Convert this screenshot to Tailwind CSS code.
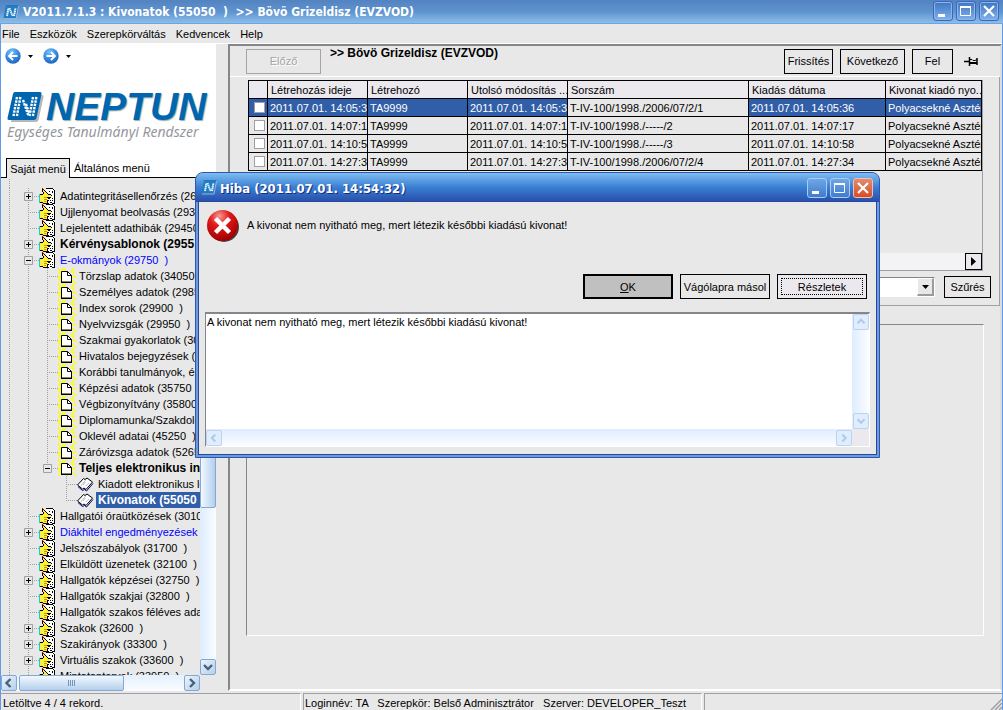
<!DOCTYPE html>
<html lang="hu">
<head>
<meta charset="utf-8">
<title>Neptun - Kivonatok</title>
<script src="https://cdn.jsdelivr.net/npm/@tailwindcss/browser@4"></script>
</head>
<body class="h-screen overflow-hidden bg-[#e8e8e8] font-['Liberation_Sans',Arial,sans-serif] text-[11px] leading-4 text-black">

<svg class="absolute size-0" aria-hidden="true">
  <defs>
    <radialGradient id="ball" cx=".4" cy=".25" r=".8"><stop offset="0" stop-color="#7cc0f8"/><stop offset=".6" stop-color="#2f86dc"/><stop offset="1" stop-color="#1f62b8"/></radialGradient>
    <radialGradient id="red" cx=".4" cy=".2" r=".8"><stop offset="0" stop-color="#f79a94"/><stop offset=".4" stop-color="#e01a1a"/><stop offset="1" stop-color="#a00000"/></radialGradient>
  </defs>
  <!-- tree guides -->
  <symbol id="v" viewBox="0 0 19 16"><path d="M8.5 0V16" stroke="#a0a0a4" stroke-dasharray="1 1"/></symbol>
  <symbol id="t" viewBox="0 0 19 16"><path d="M8.5 0V16M10 8.500H19" stroke="#a0a0a4" stroke-dasharray="1 1"/></symbol>
  <symbol id="e" viewBox="0 0 19 16"><path d="M8.500 0V8M8 8.500H19" stroke="#a0a0a4" stroke-dasharray="1 1"/></symbol>
  <symbol id="p" viewBox="0 0 19 16"><path d="M8.500 0V16M10 8.500H19" stroke="#a0a0a4" stroke-dasharray="1 1"/><path d="M4.500 4.500h8v8h-8z" fill="#e8e8e8" stroke="#a0a0a4"/><path d="M6 8.500h5M8.500 6v5" stroke="#000"/></symbol>
  <symbol id="m" viewBox="0 0 19 16"><path d="M8.500 0V16M10 8.500H19" stroke="#a0a0a4" stroke-dasharray="1 1"/><path d="M4.500 4.500h8v8h-8z" fill="#e8e8e8" stroke="#a0a0a4"/><path d="M6 8.500h5" stroke="#000"/></symbol>
  <symbol id="me" viewBox="0 0 19 16"><path d="M8.500 0V8M10 8.500H19" stroke="#a0a0a4" stroke-dasharray="1 1"/><path d="M4.500 4.500h8v8h-8z" fill="#e8e8e8" stroke="#a0a0a4"/><path d="M6 8.500h5" stroke="#000"/></symbol>
  <!-- document with a pointing hand -->
  <symbol id="hand" viewBox="0 0 19 16">
    <g shape-rendering="crispEdges">
      <path d="M7 0h7l2 2v14H7z" fill="#fff"/>
      <path d="M7 0h7v1H7zM14 1h1v1h-1zM15 2h1v13h-1zM7 15h3v1H7zM11 14h2v1h-2zM13 15h3v1h-3zM10 3h1v1h-1zM13 3h1v2h-1zM12 7h1v1h-1zM13 10h1v1h-1zM11 12h1v1h-1zM13 12h1v1h-1z" fill="#000"/>
      <path d="M0 6h1v9H0z" fill="#00d8e0"/>
      <path d="M1 7h3v7H1zM4 6h4v9H4zM8 7h4v2H8zM8 9h2v2H8zM8 11h1v3H8zM4 2h1v2H4zM5 3h1v3H5zM6 4h1v2H6zM7 5h2v2H7z" fill="#ffee3c"/>
      <path d="M1 6h3v1H1zM3 1h1v3H3zM4 4h1v2H4zM5 2h1v1H5zM6 3h1v1H6zM7 4h1v1H7zM8 5h1v1H8zM9 6h3v1H9zM12 7h1v1h-1zM8 9h4v1H8zM9 10h2v1H9zM8 12h2v1H8zM8 13h1v2H8zM1 14h3v1H1zM4 15h4v1H4z" fill="#000"/>
      <path d="M5 9h3v1H5zM5 11h3v1H5zM5 13h2v1H5z" fill="#b8a000"/>
      <path d="M3 0h1v1H3zM4 1h1v1H4z" fill="#c00000"/>
    </g>
  </symbol>
  <!-- new page with sparks -->
  <symbol id="page" viewBox="0 0 19 16">
    <path d="M0 1l4 4M6.500 0v3M16 0l-3 4M0 8.500h3M14 8.500h4M0 15.500l4-4M14 12l4 3.500M8.500 16v-2M4 0l1 3M17 4l-3 1M0 5l3 1M0 11l3-1" stroke="#ffff00" stroke-width="1.500"/>
    <path d="M3.500 3.500h6l4 4v6.500h-10z" fill="#fff" stroke="#000"/>
    <path d="M9.500 3.500v4h4" fill="none" stroke="#000"/><path d="M3 14.500h11" stroke="#000"/>
  </symbol>
  <!-- open book -->
  <symbol id="book" viewBox="0 0 19 16">
    <path d="M.5 9L6.500 2.500 8 3.500 10 2l5.500 4-6.500 7.500-2-1.500-1.500 1z" fill="#fff" stroke="#000"/>
    <path d="M1 10.500l4.500 4 2-1 2 1.500 6.500-7.500" fill="none" stroke="#000080"/>
    <path d="M9 3.500L3.500 10.500M6 9l2.500-3M9 10l3-3" fill="none" stroke="#999" stroke-width=".6"/>
  </symbol>
  <symbol id="neptun" viewBox="0 0 37 31">
    <path d="M9 3h26q2 0 1.500 2l-5 23q-.5 2-2.500 2H4z" fill="#b4b8bc"/>
    <path d="M8 0h25q2 0 1.500 2l-5 24q-.4 2-2.500 2H2q-2 0-1.500-2L6 2q.4-2 2-2z" fill="#0066b0"/>
    <g fill="none" stroke="#fff" stroke-width="2.400" stroke-dasharray="2.400 1"><path d="M10 5L6.500 24M13.400 5L9.900 24M26 5l-3.500 19M29.400 5l-3.500 19"/><path d="M16 8l5.500 16M19 12l3 9"/></g>
  </symbol>
  <symbol id="app" viewBox="0 0 16 16">
    <path d="M3 1h12.500L13 14H.5z" fill="#1d7cc4"/><path d="M1 15h12l2.500-13" fill="none" stroke="#9ab6d2"/>
    <path d="M4 12L5.500 4M6.500 4l3 8M11 12l1.500-8" fill="none" stroke="#e4f3fc" stroke-width="2" stroke-dasharray="1.500 .4"/>
  </symbol>
  <symbol id="min" viewBox="0 0 20 20"><path d="M5 13h7v3H5z" fill="#fff"/></symbol>
  <symbol id="max" viewBox="0 0 20 20"><path d="M4.500 5.500h10v9h-10z" fill="none" stroke="#fff"/><path d="M4 5h11v2H4z" fill="#fff"/></symbol>
  <symbol id="cls" viewBox="0 0 20 20"><path d="M5 5l10 10M15 5L5 15" stroke="#fff" stroke-width="2.200"/></symbol>
  <symbol id="up" viewBox="0 0 16 16"><path d="M4 9.500L8 5.500l4 4" fill="none" stroke="currentColor" stroke-width="2.400"/></symbol>
  <symbol id="dn" viewBox="0 0 16 16"><path d="M4 6l4 4 4-4" fill="none" stroke="currentColor" stroke-width="2.400"/></symbol>
  <symbol id="lf" viewBox="0 0 16 16"><path d="M9.500 4l-4 4 4 4" fill="none" stroke="currentColor" stroke-width="2.400"/></symbol>
  <symbol id="rt" viewBox="0 0 16 16"><path d="M6 4l4 4-4 4" fill="none" stroke="currentColor" stroke-width="2.400"/></symbol>
</svg>

<div class="relative flex h-full flex-col border-x border-[#5f9be8]">

  <header class="-mx-px flex h-6 shrink-0 items-center border-b border-[#6ea4e0] bg-linear-to-b from-[#5383c1] via-[#5e93cf] to-[#8cbdea] pr-1 pl-[3px]">
    <svg class="size-4"><use href="#app"/></svg>
    <h1 class="ml-1 flex-1 font-['DejaVu_Sans_Condensed','DejaVu_Sans',sans-serif] text-[12px] font-bold whitespace-pre text-white">V2011.7.1.3 : Kivonatok (55050  )  &gt;&gt; Bövö Grizeldisz (EVZVOD)</h1>
    <div class="-mt-[2px] flex gap-[3px]">
      <button aria-label="Kis méret" class="size-5 rounded-[3px] border border-[#3f66b8] bg-linear-to-b from-[#3f74c4] to-[#7fb2ea] shadow-[inset_0_0_0_1px_#8bb6ea]"><svg class="-m-px size-5"><use href="#min"/></svg></button>
      <button aria-label="Teljes méret" class="size-5 rounded-[3px] border border-[#3f66b8] bg-linear-to-b from-[#3f74c4] to-[#7fb2ea] shadow-[inset_0_0_0_1px_#8bb6ea]"><svg class="-m-px size-5"><use href="#max"/></svg></button>
      <button aria-label="Bezárás" class="size-5 rounded-[3px] border border-[#3f66b8] bg-linear-to-b from-[#3f74c4] to-[#7fb2ea] shadow-[inset_0_0_0_1px_#8bb6ea]"><svg class="-m-px size-5"><use href="#cls"/></svg></button>
    </div>
  </header>

  <nav class="flex h-5 shrink-0 items-center gap-[10px] border-b border-white pl-px">
    <button>File</button><button>Eszközök</button><button>Szerepkörváltás</button><button>Kedvencek</button><button>Help</button>
  </nav>

  <main class="flex min-h-0 flex-1">

    <aside class="flex w-[215px] shrink-0 flex-col">
      <div class="bg-white pt-1 pl-1">
        <div class="flex h-4 items-center">
          <button aria-label="Vissza"><svg class="size-4" viewBox="0 0 16 16"><circle cx="8" cy="8" r="7.700" fill="url(#ball)"/><path d="M12.500 8H4.500M8 4L4 8l4 4" fill="none" stroke="#fff" stroke-width="1.800"/></svg></button>
          <button aria-label="Előzmények" class="ml-[7px]"><svg class="size-[5px]" viewBox="0 0 5 5"><path d="M0 1h5L2.500 4z"/></svg></button>
          <button aria-label="Előre" class="ml-[10px]"><svg class="size-4" viewBox="0 0 16 16"><circle cx="8" cy="8" r="7.700" fill="url(#ball)"/><path d="M3.500 8h8M8 4l4 4-4 4" fill="none" stroke="#fff" stroke-width="1.800"/></svg></button>
          <button aria-label="Következők" class="ml-[7px]"><svg class="size-[5px]" viewBox="0 0 5 5"><path d="M0 1h5L2.500 4z"/></svg></button>
        </div>
        <div class="mt-7 flex h-[30px] items-center gap-[2px] pl-[2px]">
          <svg class="h-[31px] w-[37px]"><use href="#neptun"/></svg>
          <span class="text-[39px] leading-[30px] font-bold text-[#0066b0] italic [text-shadow:1px_1px_1px_#9aa]">NEPTUN</span>
        </div>
        <p class="pl-[2px] font-['Noto_Sans','Open_Sans',sans-serif] text-[14px] leading-5 whitespace-nowrap text-[#94979c] italic">Egységes Tanulmányi Rendszer</p>
        <div class="mt-4 -ml-1 flex h-5 items-end" role="tablist">
          <span class="h-px w-[5px] bg-black"></span>
          <button role="tab" aria-selected="true" class="h-5 w-16 border border-b-0 border-black bg-[#e8e8e8] whitespace-nowrap">Saját menü</button>
          <button role="tab" aria-selected="false" class="h-5 flex-1 border-b border-black pl-1 text-left">Általános menü</button>
        </div>
      </div>

      <div class="flex min-h-0 flex-1">
        <div class="flex min-w-0 flex-1 flex-col">
          <ul class="min-h-0 flex-1 overflow-hidden [&>li]:flex [&>li]:h-4 [&>li]:items-center [&_svg]:h-4 [&_svg]:w-[19px] [&_svg]:shrink-0 [&_a]:ml-[2px] [&_a]:shrink-0 [&_a]:whitespace-pre">
            <li class="h-[10px]! overflow-hidden"><svg><use href="#v"/></svg></li>
            <li><svg><use href="#v"/></svg><svg><use href="#p"/></svg><svg><use href="#hand"/></svg><a href="#">Adatintegritásellenőrzés (268</a></li>
            <li><svg><use href="#v"/></svg><svg><use href="#t"/></svg><svg><use href="#hand"/></svg><a href="#">Ujjlenyomat beolvasás (2930</a></li>
            <li><svg><use href="#v"/></svg><svg><use href="#t"/></svg><svg><use href="#hand"/></svg><a href="#">Lejelentett adathibák (29450</a></li>
            <li><svg><use href="#v"/></svg><svg><use href="#p"/></svg><svg><use href="#hand"/></svg><a href="#" class="text-[12px] font-bold">Kérvénysablonok (2955</a></li>
            <li><svg><use href="#v"/></svg><svg><use href="#m"/></svg><svg><use href="#hand"/></svg><a href="#" class="text-[#0000ff]">E-okmányok (29750  )</a></li>
            <li><svg><use href="#v"/></svg><svg><use href="#v"/></svg><svg><use href="#t"/></svg><svg><use href="#page"/></svg><a href="#">Törzslap adatok (34050</a></li>
            <li><svg><use href="#v"/></svg><svg><use href="#v"/></svg><svg><use href="#t"/></svg><svg><use href="#page"/></svg><a href="#">Személyes adatok (2985</a></li>
            <li><svg><use href="#v"/></svg><svg><use href="#v"/></svg><svg><use href="#t"/></svg><svg><use href="#page"/></svg><a href="#">Index sorok (29900  )</a></li>
            <li><svg><use href="#v"/></svg><svg><use href="#v"/></svg><svg><use href="#t"/></svg><svg><use href="#page"/></svg><a href="#">Nyelvvizsgák (29950  )</a></li>
            <li><svg><use href="#v"/></svg><svg><use href="#v"/></svg><svg><use href="#t"/></svg><svg><use href="#page"/></svg><a href="#">Szakmai gyakorlatok (30</a></li>
            <li><svg><use href="#v"/></svg><svg><use href="#v"/></svg><svg><use href="#t"/></svg><svg><use href="#page"/></svg><a href="#">Hivatalos bejegyzések (3</a></li>
            <li><svg><use href="#v"/></svg><svg><use href="#v"/></svg><svg><use href="#t"/></svg><svg><use href="#page"/></svg><a href="#">Korábbi tanulmányok, ére</a></li>
            <li><svg><use href="#v"/></svg><svg><use href="#v"/></svg><svg><use href="#t"/></svg><svg><use href="#page"/></svg><a href="#">Képzési adatok (35750</a></li>
            <li><svg><use href="#v"/></svg><svg><use href="#v"/></svg><svg><use href="#t"/></svg><svg><use href="#page"/></svg><a href="#">Végbizonyítvány (35800</a></li>
            <li><svg><use href="#v"/></svg><svg><use href="#v"/></svg><svg><use href="#t"/></svg><svg><use href="#page"/></svg><a href="#">Diplomamunka/Szakdolg</a></li>
            <li><svg><use href="#v"/></svg><svg><use href="#v"/></svg><svg><use href="#t"/></svg><svg><use href="#page"/></svg><a href="#">Oklevél adatai (45250  )</a></li>
            <li><svg><use href="#v"/></svg><svg><use href="#v"/></svg><svg><use href="#t"/></svg><svg><use href="#page"/></svg><a href="#">Záróvizsga adatok (5265</a></li>
            <li><svg><use href="#v"/></svg><svg><use href="#v"/></svg><svg><use href="#me"/></svg><svg><use href="#page"/></svg><a href="#" class="text-[12px] font-bold">Teljes elektronikus in</a></li>
            <li><svg><use href="#v"/></svg><svg><use href="#v"/></svg><span class="w-[19px] shrink-0"></span><svg><use href="#t"/></svg><svg><use href="#book"/></svg><a href="#">Kiadott elektronikus le</a></li>
            <li><svg><use href="#v"/></svg><svg><use href="#v"/></svg><span class="w-[19px] shrink-0"></span><svg><use href="#e"/></svg><svg><use href="#book"/></svg><a href="#" class="ml-0! flex-1 bg-[#315ea8] pl-[2px] text-[12px] font-bold text-white">Kivonatok (55050</a></li>
            <li><svg><use href="#v"/></svg><svg><use href="#t"/></svg><svg><use href="#hand"/></svg><a href="#">Hallgatói óraütközések (3010</a></li>
            <li><svg><use href="#v"/></svg><svg><use href="#p"/></svg><svg><use href="#hand"/></svg><a href="#" class="text-[#0000ff]">Diákhitel engedményezések (</a></li>
            <li><svg><use href="#v"/></svg><svg><use href="#t"/></svg><svg><use href="#hand"/></svg><a href="#">Jelszószabályok (31700  )</a></li>
            <li><svg><use href="#v"/></svg><svg><use href="#t"/></svg><svg><use href="#hand"/></svg><a href="#">Elküldött üzenetek (32100  )</a></li>
            <li><svg><use href="#v"/></svg><svg><use href="#p"/></svg><svg><use href="#hand"/></svg><a href="#">Hallgatók képzései (32750  )</a></li>
            <li><svg><use href="#v"/></svg><svg><use href="#t"/></svg><svg><use href="#hand"/></svg><a href="#">Hallgatók szakjai (32800  )</a></li>
            <li><svg><use href="#v"/></svg><svg><use href="#t"/></svg><svg><use href="#hand"/></svg><a href="#">Hallgatók szakos féléves ada</a></li>
            <li><svg><use href="#v"/></svg><svg><use href="#p"/></svg><svg><use href="#hand"/></svg><a href="#">Szakok (32600  )</a></li>
            <li><svg><use href="#v"/></svg><svg><use href="#p"/></svg><svg><use href="#hand"/></svg><a href="#">Szakirányok (33300  )</a></li>
            <li><svg><use href="#v"/></svg><svg><use href="#p"/></svg><svg><use href="#hand"/></svg><a href="#">Virtuális szakok (33600  )</a></li>
            <li><svg><use href="#v"/></svg><svg><use href="#t"/></svg><svg><use href="#hand"/></svg><a href="#">Mintatantervek (33950  )</a></li>
          </ul>
          <div class="flex h-4 shrink-0 bg-linear-to-b from-[#e3f0ff] to-[#fbfdff] text-[#4a6078]">
            <button aria-label="Balra" class="size-4 rounded-[2px] border border-[#86a8d0] bg-linear-to-br from-[#eaf5fe] to-[#b4cfec]"><svg class="-m-px size-4"><use href="#lf"/></svg></button>
            <span class="ml-[2px] flex w-[105px] items-center justify-center gap-px rounded-[2px] border border-[#86a8d0] bg-linear-to-b from-[#f2f9ff] to-[#b4cfec]"><i class="h-[6px] w-px bg-[#7894b8]"></i><i class="h-[6px] w-px bg-[#7894b8]"></i><i class="h-[6px] w-px bg-[#7894b8]"></i><i class="h-[6px] w-px bg-[#7894b8]"></i></span>
            <button aria-label="Jobbra" class="ml-auto size-4 rounded-[2px] border border-[#86a8d0] bg-linear-to-br from-[#eaf5fe] to-[#b4cfec]"><svg class="-m-px size-4"><use href="#rt"/></svg></button>
          </div>
        </div>
        <div class="mb-4 flex w-4 shrink-0 flex-col bg-linear-to-r from-[#dcecff] to-[#fbfdff] text-[#4a6078]">
          <button aria-label="Fel" class="size-4 rounded-[2px] border border-[#86a8d0] bg-linear-to-br from-[#eaf5fe] to-[#b4cfec]"><svg class="-m-px size-4"><use href="#up"/></svg></button>
          <span class="h-[314px] rounded-[2px] border border-[#86a8d0] bg-linear-to-r from-[#f2f9ff] to-[#b4cfec]"></span>
          <button aria-label="Le" class="mt-auto size-4 rounded-[2px] border border-[#86a8d0] bg-linear-to-br from-[#eaf5fe] to-[#b4cfec]"><svg class="-m-px size-4"><use href="#dn"/></svg></button>
        </div>
      </div>
    </aside>

    <section class="ml-3 flex min-w-0 flex-1 flex-col border-2 border-t-[#85858c] border-r-[#dcdce0] border-b-white border-l-[#85858c]">
      <div class="flex h-[31px] shrink-0 items-center border-b border-white pr-[22px] pl-4">
        <button disabled class="h-[25px] w-[75px] border border-[#a5a5a8] text-[#a5a5a8] [text-shadow:1px_1px_0_#fff]">Előző</button>
        <h2 class="ml-[9px] flex-1 self-start text-[12px] leading-[14px] font-bold">&gt;&gt; Bövö Grizeldisz (EVZVOD)</h2>
        <button class="h-[25px] w-[49px] border border-black">Frissítés</button>
        <button class="ml-[7px] h-[25px] w-[65px] border border-black">Következő</button>
        <button class="ml-[7px] h-[25px] w-[41px] border border-black">Fel</button>
        <button aria-label="Rögzítés" class="ml-[11px]"><svg class="h-[9px] w-[14px]" viewBox="0 0 14 9"><path d="M0 4.500h5" stroke="#000" stroke-width="1.500"/><path d="M5.500 0v9M13 1v7" stroke="#000" stroke-width="1.500"/><path d="M6 2.500h2l1 1h2l2-1" fill="none" stroke="#000"/><path d="M6 6h7" stroke="#000" stroke-width="2"/></svg></button>
      </div>

      <div class="flex h-[229px] shrink-0 flex-col border-r border-b border-[#a0a0a4] pr-2 pl-[18px]">
        <div class="mt-[3px] mr-2 flex h-[191px] shrink-0 flex-col border-r border-b border-[#a0a0a4]">
          <table class="w-full table-fixed border-collapse text-left [&_td]:h-[18px] [&_td]:overflow-hidden [&_td]:border [&_td]:border-black [&_td]:p-0 [&_td]:pl-[2px] [&_td]:leading-[14px] [&_td]:whitespace-nowrap [&_th]:h-[18px] [&_th]:overflow-hidden [&_th]:border [&_th]:border-black [&_th]:bg-[#ebe9ed] [&_th]:p-0 [&_th]:pl-[3px] [&_th]:leading-[14px] [&_th]:font-normal [&_th]:whitespace-nowrap [&_input]:mx-auto [&_input]:block [&_input]:size-[11px] [&_input]:appearance-none [&_input]:border [&_input]:border-[#a0a0a4] [&_input]:bg-white">
            <colgroup><col class="w-[19px]"><col class="w-[100px]"><col class="w-[100px]"><col class="w-[100px]"><col><col class="w-[137px]"><col class="w-[96px]"></colgroup>
            <thead><tr><th></th><th>Létrehozás ideje</th><th>Létrehozó</th><th>Utolsó módosítás ...</th><th>Sorszám</th><th>Kiadás dátuma</th><th>Kivonat kiadó nyo...</th></tr></thead>
            <tbody>
              <tr class="bg-[#315ea8] text-white"><td><input type="checkbox" aria-label="1. sor"></td><td>2011.07.01. 14:05:3</td><td>TA9999</td><td>2011.07.01. 14:05:3</td><td class="bg-[#e8e8e8] text-black">T-IV-100/1998./2006/07/2/1</td><td>2011.07.01. 14:05:36</td><td>Polyacsekné Asztér</td></tr>
              <tr><td><input type="checkbox" aria-label="2. sor"></td><td>2011.07.01. 14:07:1</td><td>TA9999</td><td>2011.07.01. 14:07:1</td><td>T-IV-100/1998./-----/2</td><td>2011.07.01. 14:07:17</td><td>Polyacsekné Asztér</td></tr>
              <tr><td><input type="checkbox" aria-label="3. sor"></td><td>2011.07.01. 14:10:5</td><td>TA9999</td><td>2011.07.01. 14:10:5</td><td>T-IV-100/1998./-----/3</td><td>2011.07.01. 14:10:58</td><td>Polyacsekné Asztér</td></tr>
              <tr><td><input type="checkbox" aria-label="4. sor"></td><td>2011.07.01. 14:27:3</td><td>TA9999</td><td>2011.07.01. 14:27:3</td><td>T-IV-100/1998./2006/07/2/4</td><td>2011.07.01. 14:27:34</td><td>Polyacsekné Asztér</td></tr>
            </tbody>
          </table>
          <div class="mt-auto flex h-[17px] justify-end bg-[#f3f2f4]">
            <button aria-label="Görgetés jobbra" class="h-[17px] w-[17px] border border-black bg-[#ebe9ed]"><svg class="mx-auto h-[9px] w-[5px]" viewBox="0 0 5 9"><path d="M0 0l5 4.500L0 9z"/></svg></button>
          </div>
        </div>
        <div class="mt-[5px] flex h-[22px] items-center justify-end gap-[9px]">
          <div class="relative w-[400px]">
            <select aria-label="Szűrés mezője" class="block h-5 w-full appearance-none border border-t-[#85858c] border-r-white border-b-white border-l-[#85858c] bg-white"><option></option></select>
            <span class="pointer-events-none absolute top-px right-px flex h-[18px] w-[17px] items-center justify-center border border-r-2 border-b-2 border-white border-r-[#9a9aa0] border-b-[#9a9aa0] bg-[#e8e8e8]"><svg class="h-1 w-[7px]" viewBox="0 0 7 4"><path d="M0 0h7L3.500 4z"/></svg></span>
          </div>
          <button class="h-[22px] w-[47px] border border-black">Szűrés</button>
        </div>
      </div>
      <div class="mt-[18px] mr-4 mb-[53px] ml-4 flex-1 border border-t-[#85858c] border-r-white border-b-white border-l-[#85858c]"></div>
    </section>
  </main>

  <footer class="mt-[2px] flex h-[17px] shrink-0 items-stretch gap-[2px] leading-[18px] whitespace-pre">
    <div class="w-[300px] border-t border-r border-t-[#a0a0a4] border-r-white pl-[2px]">Letöltve 4 / 4 rekord.</div>
    <div class="w-[399px] border-t border-r border-l border-t-[#a0a0a4] border-r-white border-l-[#a0a0a4] pl-px">Loginnév: TA   Szerepkör: Belső Adminisztrátor   Szerver: DEVELOPER_Teszt</div>
    <div class="flex flex-1 items-end justify-end border-t border-l border-[#a0a0a4]"><svg class="size-3" viewBox="0 0 12 12"><path d="M1 12L12 1M5 12l7-7M9 12l3-3" stroke="#a0a0a4" stroke-width="1.500"/></svg></div>
  </footer>

  <!-- error dialog -->
  <div role="dialog" aria-labelledby="dlg" class="absolute top-[172px] left-[194px] flex w-[685px] flex-col rounded-t-lg border border-[#2e56ae] bg-[#6e9bdc]">
    <div class="flex h-[29px] items-center rounded-t-[7px] border-b border-[#2548a0] bg-linear-to-b from-[#7fbcf0] via-[#3a80d4] to-[#2a50ac] pr-[6px] pl-[5px]">
      <svg class="size-4"><use href="#app"/></svg>
      <h2 id="dlg" class="mt-[3px] ml-[3px] flex-1 font-['DejaVu_Sans_Condensed','DejaVu_Sans',sans-serif] text-[13px] font-bold text-white [text-shadow:1px_1px_0_#14307c]">Hiba (2011.07.01. 14:54:32)</h2>
      <div class="mt-[2px] flex gap-[3px]">
        <button aria-label="Kis méret" class="size-5 rounded-[3px] border border-[#a8ccf4] bg-linear-to-b from-[#6fa6e6] to-[#3f7ccc]"><svg class="-m-px size-5"><use href="#min"/></svg></button>
        <button aria-label="Teljes méret" class="size-5 rounded-[3px] border border-[#a8ccf4] bg-linear-to-b from-[#6fa6e6] to-[#3f7ccc]"><svg class="-m-px size-5"><use href="#max"/></svg></button>
        <button aria-label="Bezárás" class="size-5 rounded-[3px] border border-[#f0c0b0] bg-linear-to-b from-[#e08a70] to-[#d84a20]"><svg class="-m-px size-5"><use href="#cls"/></svg></button>
      </div>
    </div>
    <div class="mx-[2px] mb-[2px] border border-t-0 border-[#2548a0] bg-[#e8e8e8] px-[6px] pt-2 pb-[7px]">
      <div class="flex h-16 items-start pl-[2px]">
        <svg class="size-8" viewBox="0 0 32 32"><circle cx="17" cy="17" r="15" fill="#444"/><circle cx="15.500" cy="15.500" r="15.500" fill="url(#red)"/><path d="M8.500 8.500l14 14M22.500 8.500l-14 14" stroke="#fff" stroke-width="4.500"/></svg>
        <p class="mt-[7px] ml-2">A kivonat nem nyitható meg, mert létezik későbbi kiadású kivonat!</p>
      </div>
      <div class="flex justify-end gap-[7px] pr-[3px]">
        <button class="h-[25px] w-[90px] border-2 border-black bg-[#c0c0c0]"><u>O</u>K</button>
        <button class="h-[25px] w-[90px] border border-black whitespace-nowrap">Vágólapra másol</button>
        <button class="h-[25px] w-[90px] border border-black bg-[#ebe9ed] p-[3px]"><span class="flex h-full items-center justify-center border border-dotted border-black">Részletek</span></button>
      </div>
      <div class="mt-[13px] flex h-[135px] flex-col border border-t-2 border-t-[#85858c] border-r-white border-b-white border-l-[#85858c] bg-white">
        <div class="flex min-h-0 flex-1">
          <textarea aria-label="Részletek" readonly class="block flex-1 resize-none overflow-hidden pl-px leading-4 whitespace-pre outline-none">A kivonat nem nyitható meg, mert létezik későbbi kiadású kivonat!</textarea>
          <div class="flex w-[17px] flex-col items-center justify-between bg-linear-to-r from-[#dfecff] to-[#fbfdff] text-[#b4cae4]">
            <svg class="size-4 rounded-[2px] border border-[#bcd2ee] bg-[#dfeeff]"><use href="#up"/></svg>
            <svg class="size-4 rounded-[2px] border border-[#bcd2ee] bg-[#dfeeff]"><use href="#dn"/></svg>
          </div>
        </div>
        <div class="flex h-[17px] bg-[#ebe9ed]">
          <div class="flex flex-1 items-center justify-between bg-linear-to-b from-[#dfecff] to-[#fbfdff] text-[#b4cae4]">
            <svg class="size-4 rounded-[2px] border border-[#bcd2ee] bg-[#dfeeff]"><use href="#lf"/></svg>
            <svg class="size-4 rounded-[2px] border border-[#bcd2ee] bg-[#dfeeff]"><use href="#rt"/></svg>
          </div>
          <span class="w-[17px]"></span>
        </div>
      </div>
    </div>
  </div>
</div>
</body>
</html>
